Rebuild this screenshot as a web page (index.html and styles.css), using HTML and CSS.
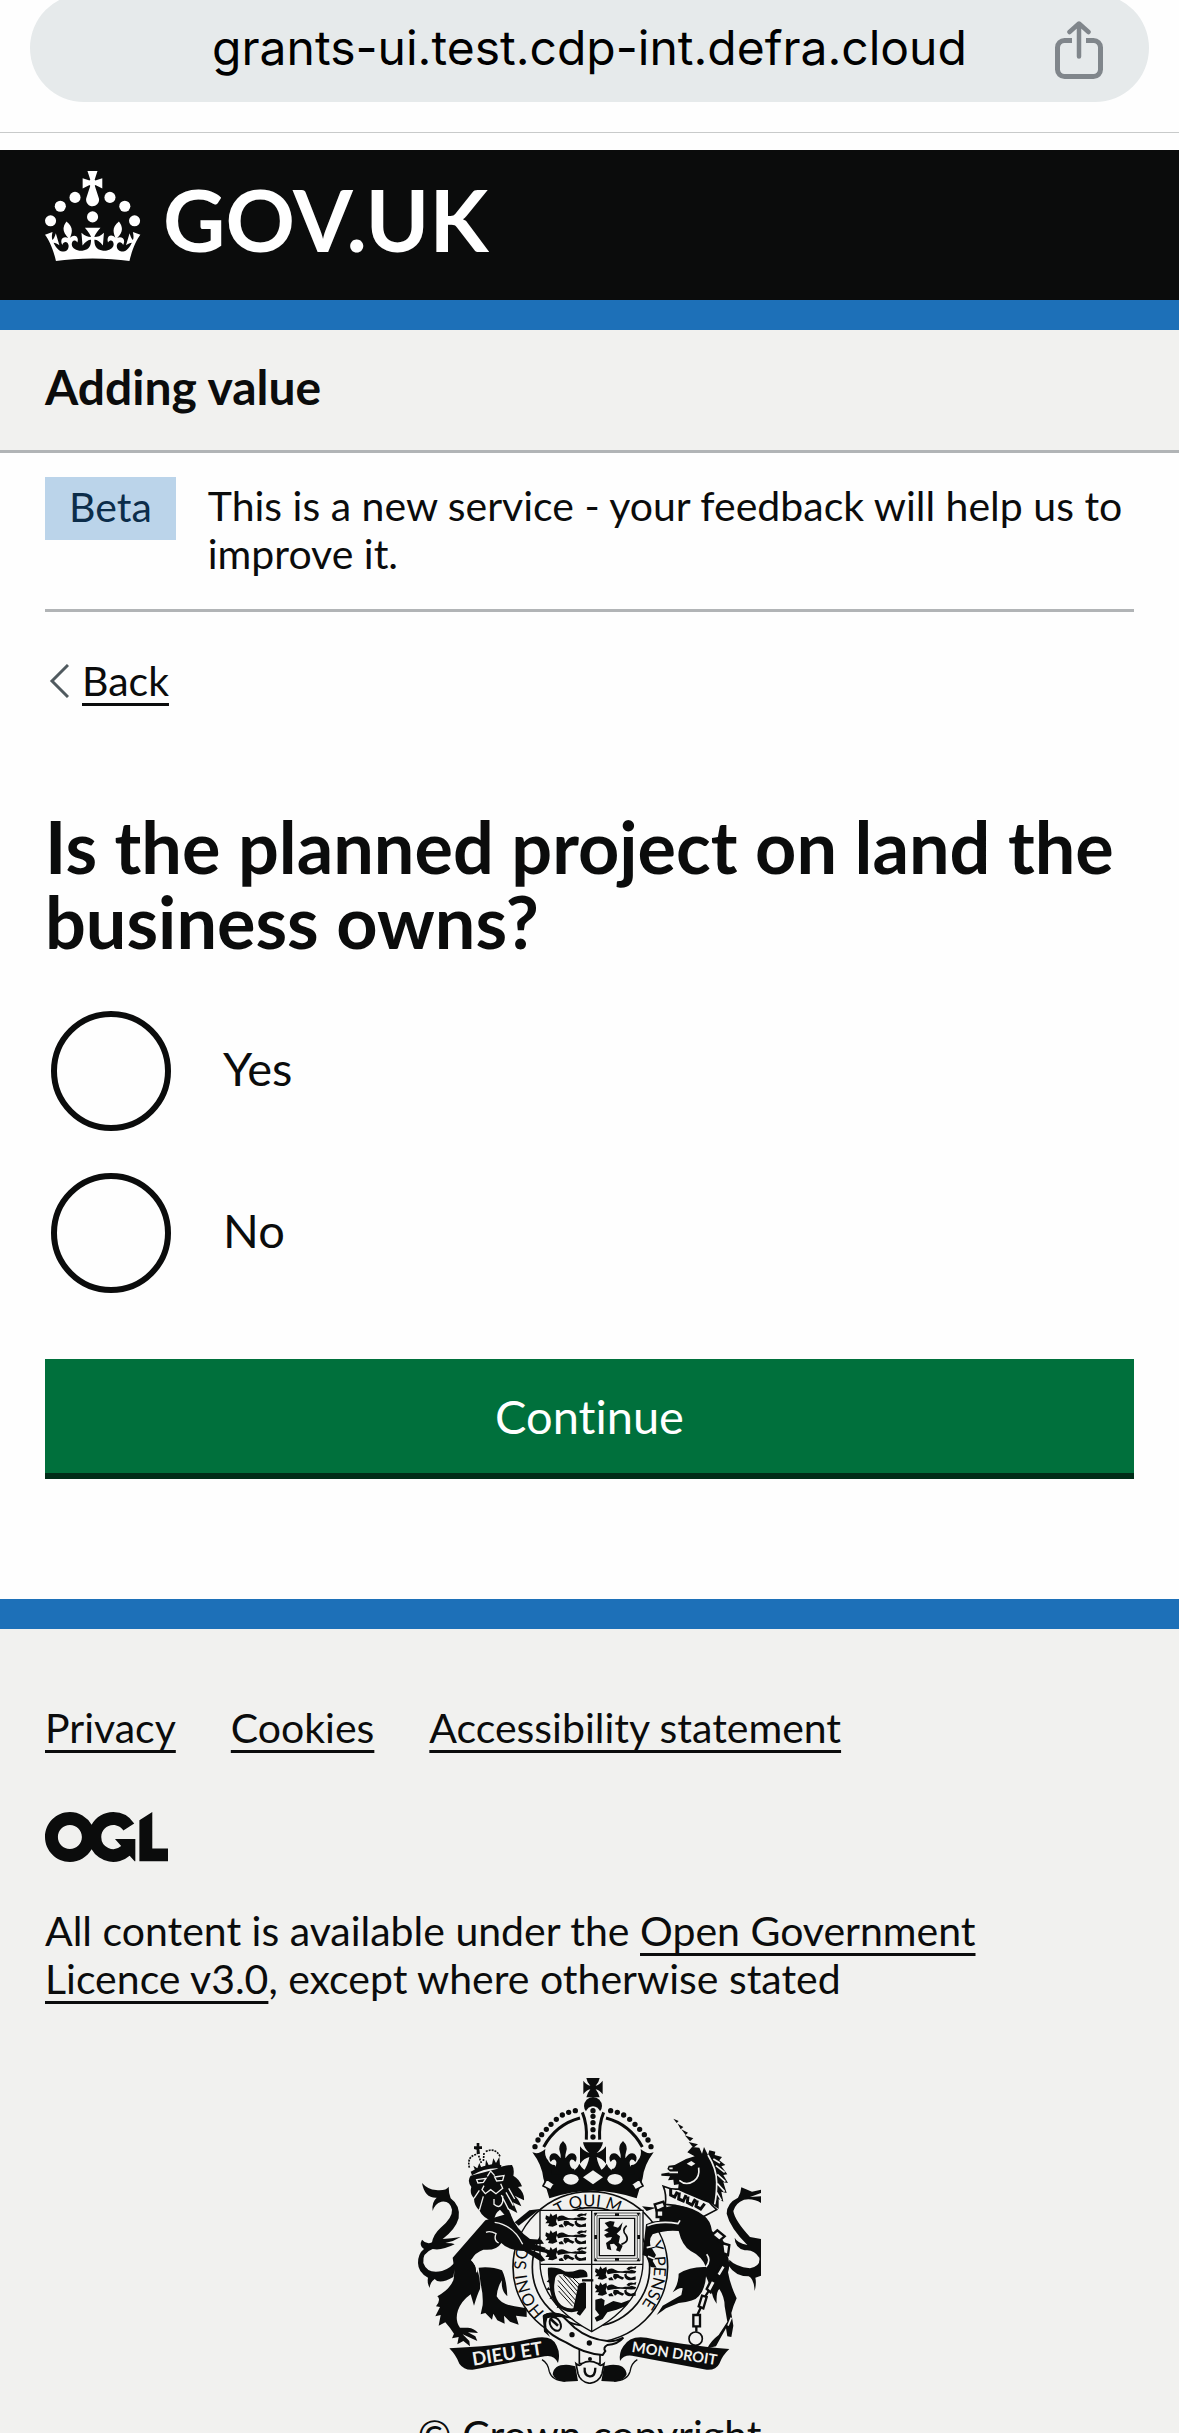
FILE: index.html
```
<!DOCTYPE html>
<html lang="en">
<head>
<meta charset="utf-8">
<meta name="viewport" content="width=device-width, initial-scale=1">
<title>Is the planned project on land the business owns? - Adding value</title>
<link rel="stylesheet" href="styles.css">
</head>
<body>
<div class="screen">
  <div class="browser-bar">
    <div class="address">
      <span class="address-url">grants-ui.test.cdp-int.defra.cloud</span>
      <button class="share" type="button" aria-label="Share">
        <svg viewBox="0 0 48 58" width="48" height="58" fill="none" stroke="#80868b" stroke-width="5" aria-hidden="true">
          <path d="M17 19.500H9.500a7 7 0 0 0-7 7v22a7 7 0 0 0 7 7h29a7 7 0 0 0 7-7v-22a7 7 0 0 0-7-7H31"/>
          <path d="M24 35.500V3M14.500 11 24 2.500 33.500 11" stroke-width="4.500" stroke-linecap="round" stroke-linejoin="round"/>
        </svg>
      </button>
    </div>
  </div>

  <header class="header">
    <a class="logo" href="#" aria-label="GOV.UK">
      <svg class="logo-crown" viewBox="0 0 64 60" width="96" height="90" fill="currentColor" aria-hidden="true">
        <circle cx="20" cy="17.6" r="3.7"/><circle cx="10.2" cy="23.5" r="3.7"/><circle cx="3.7" cy="33.2" r="3.7"/>
        <circle cx="31.7" cy="30.6" r="3.7"/><circle cx="43.3" cy="17.6" r="3.7"/><circle cx="53.2" cy="23.5" r="3.7"/><circle cx="59.7" cy="33.2" r="3.7"/>
        <path d="M33.1,9.8c.2-.1.3-.3.5-.5l4.6,2.4v-6.8l-4.6,1.5c-.1-.2-.3-.3-.5-.5l1.9-5.9h-6.7l1.9,5.900c-.2.1-.3.3-.5.5l-4.6-1.5v6.8l4.6-2.400c.1.2.3.3.5.5l-2.6,8c-.9,2.8,1.2,5.7,4.1,5.700h0c3,0,5.1-2.9,4.1-5.700l-2.6-8ZM37,37.9s-3.4,3.8-4.1,6.1c2.2,0,4.2-.5,6.4-2.8l-.7,8.500c-2-2.8-4.4-4.1-5.7-3.8.1,3.1.5,6.7,5.8,7.2,3.7.3,6.7-1.5,7-3.8.4-2.6-2-4.3-3.7-1.6-1.4-4.5,2.4-6.1,4.9-3.2-1.9-4.5-1.8-7.7,2.4-10.9,3,4,2.6,7.3-1.2,11.1,2.4-1.3,6.2,0,4,4.6-1.2-2.8-3.7-2.2-4.2.2-.3,1.7.7,3.7,3,4.2,1.9.3,4.7-.9,7-5.9-1.3,0-2.4.7-3.9,1.7l2.4-8c.6,2.3,1.4,3.7,2.2,4.5.6-1.6.5-2.8,0-5.3l5,1.8c-2.6,3.6-5.2,8.7-7.3,17.5-7.4-1.1-15.7-1.7-24.5-1.700h0c-8.8,0-17.1.6-24.5,1.7-2.1-8.9-4.7-13.9-7.3-17.5l5-1.8c-.5,2.5-.6,3.7,0,5.3.8-.8,1.6-2.3,2.2-4.5l2.4,8c-1.5-1-2.6-1.7-3.9-1.7,2.3,5,5.2,6.2,7,5.9,2.3-.4,3.3-2.4,3-4.2-.5-2.4-3-3.1-4.2-.2-2.2-4.6,1.6-6,4-4.6-3.7-3.7-4.2-7.1-1.2-11.1,4.2,3.2,4.3,6.4,2.4,10.9,2.5-2.8,6.3-1.3,4.9,3.2-1.8-2.7-4.1-1-3.7,1.6.3,2.3,3.3,4.1,7,3.8,5.4-.5,5.7-4.2,5.8-7.2-1.3-.2-3.7,1-5.7,3.8l-.7-8.500c2.2,2.3,4.2,2.7,6.4,2.8-.7-2.3-4.1-6.1-4.1-6.100h10.6Z"/>
      </svg>
      <span class="logo-name">GOV.UK</span>
    </a>
  </header>

  <div class="service"><span class="service-name">Adding value</span></div>

  <div class="container">
    <div class="phase">
      <strong class="tag">Beta</strong>
      <span class="phase-text">This is a new service - your feedback will help us to improve it.</span>
    </div>

    <a class="back" href="#">
      <svg viewBox="0 0 20 34" width="20" height="34" fill="none" stroke="#505a5f" stroke-width="3" aria-hidden="true"><path d="M19 1 3 17 19 33"/></svg>
      <span class="back-label">Back</span>
    </a>

    <main>
      <form>
        <fieldset class="question">
          <legend class="question-title"><h1>Is the planned project on land the business owns?</h1></legend>
          <div class="radios">
            <div class="radio"><input type="radio" name="owned" id="owned-yes"><label for="owned-yes">Yes</label></div>
            <div class="radio"><input type="radio" name="owned" id="owned-no"><label for="owned-no">No</label></div>
          </div>
        </fieldset>
        <button class="continue" type="button">Continue</button>
      </form>
    </main>
  </div>

  <footer class="footer">
    <ul class="footer-links">
      <li><a href="#">Privacy</a></li>
      <li><a href="#">Cookies</a></li>
      <li><a href="#">Accessibility statement</a></li>
    </ul>
    <svg class="ogl" viewBox="0 0 483.2 195.7" width="123" height="50" fill="currentColor" role="img" aria-label="Open Government Licence">
      <path d="M421.5 142.8V.1l-50.7 32.3v161.100h112.400v-50.700zm-122.3-9.6A47.12 47.12 0 0 1 221 97.8c0-26 21.1-47.1 47.1-47.1 16.7 0 31.4 8.7 39.7 21.8l42.7-27.2A97.63 97.63 0 0 0 268.1 0c-36.5 0-68.3 20.1-85.1 49.7A98 98 0 0 0 97.8 0C43.9 0 0 43.9 0 97.8s43.9 97.8 97.8 97.8c36.5 0 68.3-20.1 85.1-49.7a97.76 97.76 0 0 0 149.6 25.4l19.4 22.200h3v-87.800h-80l24.3 27.5zM97.8 145c-26 0-47.1-21.1-47.1-47.1s21.1-47.1 47.1-47.1 47.1 21.1 47.1 47.1S123.8 145 97.8 145"/>
    </svg>
    <p class="licence">All content is available under the <a href="#">Open Government Licence v3.0</a>, except where otherwise stated</p>
    <a class="copyright" href="#">
      <svg class="arms" viewBox="54 57 1029 918" width="343" height="306" aria-hidden="true">
        <defs>
          <g id="passant">
            <path d="M4 8 14 12 18 2 24 10 36 3 38 14 34 26 38 36 24 42 10 40 14 32 2 32 8 24 2 18Z"/>
            <path d="M36 16Q48 4 62 12T92 15Q104 16 112 12L126 17L122 23Q104 24 92 22T62 22L40 26Z"/>
            <path d="M96 10Q104 0 118 4L126 1L124 9Q110 6 104 14ZM58 25Q72 22 76 30L90 36L84 42L70 36L62 42L56 34ZM98 22Q92 32 110 36L124 32V42L104 44Q88 40 90 26ZM42 38 52 34 58 44 44 44Z"/>
          </g>
          <g id="fleur">
            <path d="M0-38Q17-22 9-4Q6 5 7 14Q19-6 34 0Q46 10 37 25Q31 16 24 18Q16 24 23 39Q26 46 34 46V62H-34V46Q-26 46-23 39Q-16 24-24 18Q-31 16-37 25Q-46 10-34 0Q-19-6-7 14Q-6 5-9-4Q-17-22 0-38Z"/>
          </g>
          <path id="garter-left" d="M435 760A190 190 0 0 1 476 459"/>
          <path id="garter-top" d="M443 495A181 181 0 0 1 699 495"/>
          <path id="garter-right" d="M744 543A190 190 0 0 1 590 813"/>
        </defs>

        <!-- garter -->
        <g class="ground">
          <ellipse cx="571" cy="624" rx="232" ry="226" stroke-width="5"/>
          <ellipse cx="573" cy="624" rx="176" ry="178" stroke-width="5"/>
        </g>
        <g class="garter-text">
          <text><textPath href="#garter-left">HONI SO</textPath></text>
          <text><textPath href="#garter-top" startOffset="40">T QUI M</textPath></text>
          <text><textPath href="#garter-right" startOffset="10">Y PENSE</textPath></text>
        </g>

        <!-- shield -->
        <g class="ground">
          <path d="M420 454H729V610Q728 735 575 818Q421 735 420 610Z" stroke-width="4"/>
          <path d="M575 454V818M420 616H729" stroke-width="4"/>
          <path d="M583 462H720V606H583ZM591 470H712V598H591Z" stroke-width="2"/>
          <path d="M598 478H704V590H598Z" stroke-width="4"/>
        </g>
        <path d="M582 462l10 0-5 10zM710 462h10l-5 10zM582 606h10l-5-10zM710 606h10l-5-10zM645 463h12v8h-12zM645 597h12v8h-12zM583 528h8v12h-8zM712 528h8v12h-8z"/>
        <use href="#passant" x="434" y="461"/><use href="#passant" x="434" y="512"/><use href="#passant" x="434" y="562"/>
        <use href="#passant" x="583" y="620"/><use href="#passant" x="583" y="668"/>
        <path d="M586 722 604 718 614 724 612 740 640 726 664 732 690 722 676 742 650 752 622 760 608 780 590 788 584 776 598 768 586 752Z"/>
        <path d="M614 492 630 486 644 488 640 502 654 506 668 490 662 512 650 524 660 532 656 552 668 560 660 578 648 574 652 564 642 554 630 556 634 574 622 570 618 552 632 542 636 534 620 536 612 528 626 520 612 514 626 506Z"/>
        <path d="M664 556Q690 548 678 528Q664 514 680 500" class="line" stroke-width="5"/>
        <!-- harp -->
        <path d="M444 626Q474 624 488 634T536 632Q566 630 562 654L540 656Q512 662 488 646Q464 640 464 668Q458 702 476 730Q490 750 520 748L536 674 552 670 558 672V746L540 770 530 764 534 756Q500 768 468 738Q450 712 448 676Q442 642 444 626Z"/>
        <path d="M448 660l-8 8 12 4zM446 684l-8 8 14 2zM456 710l-8 10 14-2zM474 734l-4 14 12-6z"/>
        <path d="M478 650 538 718M474 664 532 730M474 680 526 738M476 696 518 742M490 648 540 706M504 652 542 694M518 656 544 682" class="line" stroke-width="3"/>
        <path d="M546 664H580" class="line" stroke-width="7"/>

        <!-- royal crown -->
        <path d="M559 57H599Q597 70 587 80Q597 78 608 65V106Q597 92 587 91Q596 102 599 115H559Q562 102 571 91Q560 92 550 106V65Q560 78 571 80Q561 70 559 57Z"/>
        <circle cx="579" cy="141" r="27"/>
        <path d="M556 242V160Q564 142 579 142T602 160V242Z" fill="#f1f1ef"/>
        <path d="M547 160Q562 196 559 242M611 160Q596 196 599 242" class="line" stroke-width="9"/>
        <path d="M540 177Q468 196 431 264M618 177Q690 196 727 264" class="line" stroke-width="9"/>
        <path class="beads" d="M579 155h0M579 172h0M579 191h0M579 212h0M579 234h0M526 155h0M506 160h0M487 168h0M469 181h0M453 196h0M439 211h0M425 227h0M414 243h0M405 263h0M632 155h0M652 160h0M671 168h0M689 181h0M705 196h0M719 211h0M733 227h0M744 243h0M753 263h0"/>
        <path d="M397 280Q416 288 436 270Q432 290 444 304Q450 318 464 318Q472 338 494 338Q528 342 538 314Q550 336 568 338H590Q608 336 620 314Q630 342 664 338Q686 338 694 318Q708 318 714 304Q726 290 722 270Q742 288 761 280Q732 318 728 358L710 418Q579 372 448 418L430 358Q426 318 397 280Z"/>
        <use href="#fleur" x="489" y="284"/><use href="#fleur" x="669" y="284"/>
        <path d="M549 250H609Q606 268 590 282Q606 278 618 262V314Q606 298 590 294Q594 320 610 340H548Q564 320 568 294Q552 298 540 314V262Q552 278 568 282Q552 268 549 250Z"/>
        <g fill="#f1f1ef">
          <path d="M579 334 609 355 579 376 549 355Z"/>
          <ellipse cx="513" cy="361" rx="23" ry="16"/><ellipse cx="645" cy="361" rx="23" ry="16"/>
        </g>
        <g class="ground">
          <path d="M440 360 463 375 452 393 429 381ZM718 360 695 375 706 393 729 381Z" stroke-width="5"/>
        </g>

        <!-- lion -->
        <path d="M66 372Q84 392 108 393Q138 396 146 383Q146 404 152 418Q182 440 176 478Q166 512 128 540Q154 538 182 534Q160 548 136 552Q158 552 164 556Q124 576 98 570Q66 582 70 612Q82 646 126 636Q154 628 168 604L160 654Q118 678 104 660Q88 672 90 687Q80 672 84 656Q54 640 54 612Q54 584 72 570Q56 560 66 542Q80 558 96 550Q100 526 122 506Q158 476 156 452Q150 424 124 428Q104 434 98 456Q94 430 110 416Q74 418 66 372Z"/>
        <path d="M256 484 158 596Q166 640 160 664Q150 690 112 712Q124 722 108 742L120 744 106 772 122 768 116 800 136 790Q150 806 162 824L156 838 176 834 172 856 190 846 210 862 208 846 188 826 214 838 232 846 226 832 204 820 234 822Q224 808 204 806L180 806Q164 784 174 754Q184 726 212 706L222 740Q232 706 240 690Q244 640 214 602Q226 580 250 572Q290 576 304 552Q324 574 372 576L424 608 436 604 420 584 392 572 440 582 436 566 404 556 432 554 424 542 390 540Q348 512 330 462Z"/>
        <path d="M236 626Q276 622 306 634Q320 662 322 712Q302 694 306 664Q292 684 290 712Q302 736 344 742L380 748V774L348 770 356 797 330 788 312 770 314 794 292 784 280 764 276 782 256 762 242 766 248 738Q250 706 242 676Z"/>
        <path d="M344 490 388 454 420 450 356 500Z"/>
        <path d="M212 350Q200 366 214 384Q208 404 222 418Q222 440 238 454Q248 478 284 490Q280 466 300 452L316 470Q326 476 334 488Q334 462 322 446L352 462Q344 440 338 430L364 442Q356 420 344 410L372 424Q374 402 354 384L366 382Q358 360 340 350Q344 330 336 318Q310 318 290 330Z"/>
        <g class="cut" stroke-width="4">
          <path d="M230 362 258 358 250 370 234 372ZM284 354 312 350 308 364 290 366ZM262 352 272 336 284 350M252 380 246 392 256 404 272 392 288 404 308 388 302 374M238 394 222 418M250 412 238 454M326 388 344 420M318 400 340 440M304 408 326 452M282 420V436Q300 452 308 428V410M284 490Q340 498 368 556M296 552Q280 544 288 524Q270 514 258 520M214 602Q232 616 230 640"/>
        </g>
        <path d="M212 338Q256 312 304 318L303 328Q256 324 216 349Z"/>
        <path d="M230 252H238V262H246V270H238L240 284 230 286V272L222 270V262H230Z"/>
        <path d="M226 336 220 320 232 328 238 312 244 326 256 320 258 302 266 318 276 316 280 298 288 312 298 294 300 318Z"/>
        <path d="M208 326Q200 290 232 286M300 292Q286 264 256 278M236 290 244 312M252 282 250 308" class="line" stroke-width="5" stroke-dasharray="6 3"/>

        <!-- unicorn -->
        <path d="M820 179 836 186 830 192ZM833 194 850 204 842 211ZM844 211 864 221 857 228ZM854 229 880 238 870 247ZM866 249 894 256 880 266Z"/>
        <path d="M862 280 876 264 898 266 906 284 912 264 924 288 928 274 946 278 944 288 966 294 958 304 976 318 964 322 982 346 970 348 984 372 970 370 980 402 964 398 970 428 956 420 956 450 942 440 928 430 900 420 870 408 834 392 836 376 822 378 820 362 804 364 810 352 784 350V344L812 340 802 330 806 320 824 318 858 300 884 292Z"/>
        <g class="cut" stroke-width="5">
          <path d="M924 288Q950 330 950 370T944 436M940 300 960 312M948 320 974 340M952 346 976 368M952 374 974 398M950 400 964 424M896 326Q900 354 882 366Q858 382 838 364M808 340 834 340M808 328H818"/>
        </g>
        <path d="M860 314 874 306 886 314 874 322Z" fill="#f1f1ef"/>
        <path d="M790 382Q800 406 796 436Q856 438 908 474L950 452Q936 440 928 430Q858 402 834 390Q812 392 790 382Z" class="ground" stroke-width="5"/>
        <path d="M812 388v20l12 6 8-16M838 400l-2 20 14 6 8-18M864 412l-2 18 14 8 10-18M892 424l-4 18 14 8 12-16" class="line" stroke-width="9"/>
        <path d="M780 452Q810 438 842 440Q882 446 912 470Q932 484 936 516Q966 540 976 574Q994 610 984 640Q990 676 1010 718Q1000 740 994 762L1000 800 994 834 982 832 978 808Q962 836 948 862L922 868Q932 846 956 828L982 788 974 742Q974 714 958 690Q948 698 950 734Q936 716 934 690L918 652Q916 690 896 712Q884 728 836 732L798 748 770 768 788 740 844 708 848 688Q840 684 818 700Q836 674 836 644Q870 622 918 624Q906 592 872 576Q846 560 836 516Q796 512 758 526Q746 540 752 562L768 588 758 606 770 626 752 624 738 592 728 588 734 532 738 496Q762 484 778 486Z"/>
        <path d="M726 442 768 446 740 456Z"/>
        <g class="cut" stroke-width="5">
          <path d="M742 500Q782 484 834 494L840 484M918 624Q934 604 920 586M740 566 766 560M744 592 764 600M984 800 994 776"/>
        </g>
        <path d="M1083 392 1056 398 1024 385Q1022 404 1014 416Q980 432 980 464Q990 506 1042 558Q1010 550 1004 536Q1004 566 1034 574Q1062 570 1078 596Q1082 622 1050 628Q1006 622 988 602L986 620Q1006 652 1046 652Q1062 660 1064 696Q1070 672 1066 656L1083 650V540L1050 534Q1004 484 1000 456Q1006 432 1032 422Q1062 418 1083 432V412L1050 414 1083 402Z"/>
        <path d="M1034 580Q1080 580 1076 612Q1056 618 1050 600Z" fill="#f1f1ef"/>
        <!-- chain -->
        <g class="ground" stroke-width="7">
          <path d="M764 436 790 428 796 444 770 456Z"/><path d="M770 454H790V474H770Z"/>
          <path d="M936 528 952 514 974 532 958 546Z"/><path d="M966 552 988 558 984 588 970 582Z"/>
          <path d="M966 616 978 624 960 654 948 646Z"/><path d="M934 662 948 670 932 700 920 690Z"/>
          <path d="M906 710 920 714 910 748 896 742Z"/><path d="M880 768H900V802H880Z"/>
          <circle cx="887" cy="839" r="20" stroke-width="5"/>
          <path d="M962 540 972 556M978 586 970 616M956 648 944 664M926 696 916 712M902 746 892 768M889 802V818"/>
        </g>

        <!-- motto scroll -->
        <path d="M148 868Q300 862 400 838Q456 826 470 860Q482 884 474 912Q462 886 434 892L218 932Q192 934 178 914Q168 888 148 868Z"/>
        <path d="M988 870Q840 856 740 836Q690 828 670 862Q656 882 660 906Q674 884 704 892L920 932Q948 934 958 914Q968 888 988 870Z"/>
        <text class="motto" transform="rotate(-9 220 920)" x="220" y="920">DIEU ET</text>
        <text class="motto motto-right" transform="rotate(9 694 878)" x="694" y="878">MON DROIT</text>
        <path d="M458 946Q462 914 508 918L526 922 534 966 492 968Q464 964 458 946ZM680 946Q676 914 630 918L612 922 604 966 646 968Q674 964 680 946Z"/>
        <path d="M426 902Q444 912 448 938Q456 966 496 966M712 902Q694 912 690 938Q682 966 642 966" class="line" stroke-width="4"/>

        <!-- belt -->
        <g class="ground" stroke-width="5">
          <path d="M538 862V914H600V862Z"/>
          <path d="M528 914Q540 924 546 914Q568 900 594 914Q600 924 612 914L606 944Q598 968 569 973Q540 968 534 944Z"/>
          <path d="M554 926Q552 950 569 952T586 926" stroke-width="7"/>
          <path d="M432 770Q450 758 484 768L524 806Q566 840 622 846Q640 850 670 836Q654 856 622 858Q608 866 616 876L608 888Q552 884 498 850Q450 828 436 808Z" stroke-width="6"/>
          <ellipse cx="466" cy="795" rx="15" ry="22" stroke-width="6" transform="rotate(-30 466 795)"/>
          <path d="M452 780 474 800" stroke-width="8"/>
        </g>
        <path d="M428 770Q460 746 524 782Q474 768 442 778Q432 806 450 834L432 818Z"/>
        <circle cx="516" cy="827" r="8"/><circle cx="568" cy="852" r="8"/><circle cx="570" cy="900" r="6"/>
      </svg>
      <span>© Crown copyright</span>
    </a>
  </footer>
</div>
</body>
</html>
```
FILE: styles.css
```
* {
  box-sizing: border-box;
}

body {
  margin: 0;
  background: #fefefe;
  color: #0b0c0c;
  font: 41px/48px Lato, "Open Sans", sans-serif;
  font-variant-ligatures: none;
}

a {
  color: inherit;
  text-decoration-thickness: 3px;
  text-underline-offset: 7px;
}

/* The visible part of the page inside the browser window */
.screen {
  height: 100vh;
  overflow: hidden;
}

/* Browser address bar, scrolled slightly off the top */
.browser-bar {
  display: flow-root;
  height: 133px;
  padding: 0 30px;
  border-bottom: 1px solid #c8caca;
  margin-bottom: 17px;
}

.address {
  display: flex;
  align-items: center;
  justify-content: center;
  position: relative;
  height: 108px;
  margin-top: -6px;
  border-radius: 54px;
  background: #e6eaeb;
  color: #000;
}

.address-url {
  font: 48px/60px Inter, sans-serif;
}

.share {
  position: absolute;
  right: 46px;
  top: 27px;
  display: flex;
  padding: 0;
  border: 0;
  background: none;
}

.header {
  padding: 21px 45px 33px;
  border-bottom: 30px solid #1d70b8;
  background: #0b0c0c;
  color: #fff;
}

.logo {
  display: flex;
  align-items: flex-start;
  gap: 22px;
  text-decoration: none;
}

.logo-name {
  font: bold 86px/96px Lato, sans-serif;
}

.service {
  padding: 27px 45px 33px;
  border-bottom: 3px solid #b1b4b6;
  background: #f1f1ef;
}

.service-name {
  display: block;
  font-size: 48px;
  font-weight: bold;
  line-height: 60px;
}

.container {
  padding: 0 45px;
}

.phase {
  display: flex;
  align-items: flex-start;
  gap: 32px;
  padding: 24px 0;
  border-bottom: 3px solid #b1b4b6;
}

.tag {
  padding: 6px 24px 9px;
  background: #bbd4ea;
  color: #0c2d4a;
  font-weight: normal;
}

.phase-text {
  padding: 5px 0 7px;
}

.back {
  display: flex;
  align-items: center;
  gap: 13px;
  margin: 45px 0 104px 4px;
  text-decoration: none;
}

.back-label {
  text-decoration: underline 3px;
  text-underline-offset: 7px;
}

.question {
  margin: 0;
  padding: 0;
  border: 0;
}

.question-title {
  padding: 0;
}

h1 {
  margin: 0 0 46px;
  font-size: 72px;
  line-height: 75px;
}

.radios {
  display: grid;
  gap: 42px;
  padding: 6px;
}

.radio {
  display: flex;
  align-items: center;
  gap: 52px;
  font-size: 47px;
  line-height: 60px;
}

.radio input {
  appearance: none;
  width: 120px;
  height: 120px;
  margin: 0;
  border: 6px solid #0b0c0c;
  border-radius: 50%;
}

.radio label {
  padding-bottom: 6px;
}

.continue {
  display: block;
  width: 100%;
  margin: 60px 0 120px;
  padding: 27px;
  border: 0;
  border-bottom: 6px solid #002d18;
  background: #00703c;
  color: #fff;
  font: 47px/60px Lato, sans-serif;
  font-variant-ligatures: none;
}

.footer {
  padding: 75px 45px;
  border-top: 30px solid #1d70b8;
  background: #f1f1ef;
}

.footer-links {
  display: flex;
  flex-wrap: wrap;
  gap: 24px 55px;
  margin: 0 0 60px;
  padding: 0;
  list-style: none;
}

.ogl {
  display: block;
}

.licence {
  max-width: 960px;
  margin: 45px 0 75px;
}

.copyright {
  display: flex;
  flex-direction: column;
  align-items: center;
  gap: 27px;
  text-decoration: none;
}

/* Royal coat of arms */
.arms {
  display: block;
  fill: #0b0c0c;
}

.ground {
  fill: #f1f1ef;
  stroke: #0b0c0c;
}

.line {
  fill: none;
  stroke: #0b0c0c;
}

.cut {
  fill: none;
  stroke: #f1f1ef;
}

.beads {
  stroke: #0b0c0c;
  stroke-width: 16px;
  stroke-linecap: round;
}

.garter-text {
  font: 50px Lato, sans-serif;
}

.motto {
  font: bold 56px Lato, sans-serif;
  fill: #f1f1ef;
}

.motto-right {
  font-size: 44px;
}
```
